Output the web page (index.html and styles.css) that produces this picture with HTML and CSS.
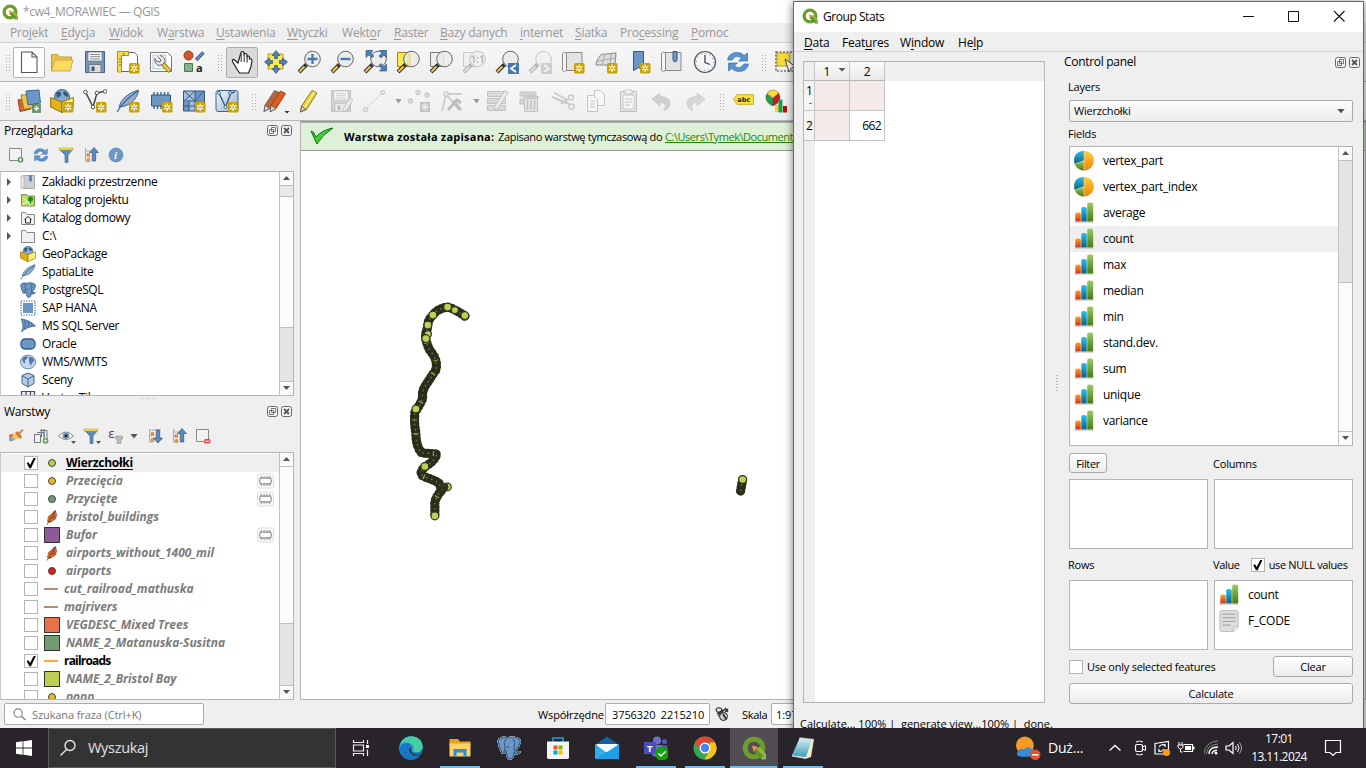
FILE: index.html
```html
<!DOCTYPE html>
<html lang="pl">
<head>
<meta charset="utf-8">
<title>cw4_MORAWIEC — QGIS</title>
<link rel="stylesheet" href="styles.css">
</head>
<body>
<svg class="sprite" aria-hidden="true">
<defs>
<linearGradient id="gO" x2="0" y2="1"><stop stop-color="#ffa030"/><stop offset="1" stop-color="#c83218"/></linearGradient>
<linearGradient id="gB" x2="0" y2="1"><stop stop-color="#2cc0ee"/><stop offset="1" stop-color="#0d5f80"/></linearGradient>
<linearGradient id="gG" x2="0" y2="1"><stop stop-color="#9ccc60"/><stop offset="1" stop-color="#477a10"/></linearGradient>
<linearGradient id="gY" x2="0" y2="1"><stop stop-color="#ffd040"/><stop offset="1" stop-color="#f88000"/></linearGradient>
<linearGradient id="gE" x2="1" y2="1"><stop stop-color="#35c8dd"/><stop offset="1" stop-color="#0d5cb8"/></linearGradient>
<linearGradient id="gS" x2="0" y2="1"><stop stop-color="#dff0f6"/><stop offset="1" stop-color="#39a0b8"/></linearGradient>
<linearGradient id="gLb" x2="1" y2="1"><stop stop-color="#f4f8fc"/><stop offset="1" stop-color="#8fb0d4"/></linearGradient>
</defs>
<symbol id="star" viewBox="0 0 24 24"><rect x="13" y="13" width="10.500" height="10.500" rx="1.500" fill="#c8a205"/><path d="M18.200 14.500v7.500M15 16.200l6.400 4M15 20.200l6.400-4" stroke="#fff" stroke-width="1.300"/><circle cx="18.200" cy="18.200" r="1" fill="#c8a205"/></symbol>
<symbol id="lens" viewBox="0 0 24 24"><path d="M9.500 14.500 2 22" stroke="#333" stroke-width="4"/><path d="M7.500 16.500 2.500 21.500" stroke="#fcc82c" stroke-width="2"/><circle cx="15.500" cy="9" r="7.800" fill="#e9ecea" fill-opacity=".88" stroke="#666" stroke-width="1"/></symbol>
<symbol id="qgis" viewBox="0 0 24 24"><circle cx="12" cy="12" r="8.800" fill="none" stroke="#6d9d2b" stroke-width="5"/><path d="m14 13.500 3.500-3L24 18v5.500h-4.500z" fill="#8fb63f"/><path d="m13 11.500 8.500 8.500-2.500 2.200-7.500-7z" fill="#5a9426"/><path d="m10 9.500 6 1.500-4.500 4.500z" fill="#f4923c"/></symbol>
<symbol id="new" viewBox="0 0 24 24"><path d="M4.500 2h10.500l5 5v15.500h-15.500zM15 2v5h5" fill="#fff" stroke="#555" stroke-width="1.100"/></symbol>
<symbol id="open" viewBox="0 0 24 24"><path d="M1.500 21V4.500h6l2 2.500h12v4" fill="#e8c050" stroke="#c49b3c"/><path d="M5 10h18l-3 11H1.500z" fill="#fcda62" stroke="#d0aa48"/></symbol>
<symbol id="save" viewBox="0 0 24 24"><path d="M2.500 1.500h19v21h-19z" fill="#6b96c6" stroke="#41658e"/><path d="M5 2h14v9H5z" fill="#f7f7f7" stroke="#777" stroke-width=".7"/><path d="M7 4.500h10M7 6.700h10M7 9h10" stroke="#888"/><path d="M6 14.500h12v8H6z" fill="#ddd" stroke="#777"/><path d="M8.500 16.500h3v4.500h-3z" fill="#36567b"/></symbol>
<symbol id="saveedit" viewBox="0 0 24 24"><use href="#save"/><path d="m21 9 3 2-6 10-4 2 .5-4z" fill="#ddd" stroke="#666"/></symbol>
<symbol id="layout" viewBox="0 0 24 24"><path d="M5.500 2.500h13l3 3v16h-16z" fill="#fff" stroke="#666"/><path d="M1.500 1.500h11v4h-7v16.500h-4z" fill="#f8dc4a" stroke="#b78e16"/><path d="M3 9h2M3 12h2M3 15h2M8 3v2" stroke="#8b6d10"/><use href="#star"/></symbol>
<symbol id="manager" viewBox="0 0 24 24"><path d="M1.500 2.500h17l4 4v15h-21z" fill="#fff" stroke="#777"/><path d="M4 5h13v14H4z" fill="#eef2f9" stroke="#9db1cf" stroke-width=".7"/><path d="m14 14 7 7.500" stroke="#967416" stroke-width="4.500"/><path d="m14 14 6.500 7" stroke="#f3d34a" stroke-width="2.500"/><path d="M8.500 6.500 12 10l-1 2-3-.5-2-3q-1 5 4 7l4-1 2-3q0-5-5-6" fill="#e8e8e8" stroke="#666"/></symbol>
<symbol id="style" viewBox="0 0 24 24"><circle cx="6.500" cy="5.500" r="4.500" fill="#d0562c" stroke="#8e3b20"/><path d="M21.500 2.500 14 10" stroke="#41658e" stroke-width="3.500"/><path d="M21 3 14.500 9.500" stroke="#6b96c6" stroke-width="1.500"/><path d="M2.500 13.500h8v8h-8z" fill="#83b287" stroke="#4b7a4f"/></symbol>
<symbol id="hand" viewBox="0 0 24 24"><path d="M8 13 4 9.500q-2-.5-1.500 2l5 8.500 2 3h9q3-6 3.500-12 0-3-2.500-2V7q-1-2-2.500 0V4.500q-1.500-2-3 0V2.500q-2-2-3 0z" fill="#fff" stroke="#222" stroke-width="1.200"/><path d="M11.200 4v8M14.200 5v7M17.200 7.500v5" stroke="#333"/></symbol>
<symbol id="pan" viewBox="0 0 24 24"><path d="M4 4h15v15H4z" fill="#fce94f" stroke="#b7971b"/><path d="m12 .5 4 5h-2.500v3h-3v-3H8zM12 23.500l4-5h-2.500v-3h-3v3H8zM.5 12l5-4v2.500h3v3h-3V16zM23.500 12l-5-4v2.500h-3v3h3V16z" fill="#4f7fb4" stroke="#355a84" stroke-width=".8"/></symbol>
<symbol id="zin" viewBox="0 0 24 24"><use href="#lens"/><path d="M10.500 9h10M15.500 4v10" stroke="#4878af" stroke-width="2.300"/></symbol>
<symbol id="zout" viewBox="0 0 24 24"><use href="#lens"/><path d="M10.500 9h10" stroke="#4878af" stroke-width="2.300"/></symbol>
<symbol id="zfull" viewBox="0 0 24 24"><use href="#lens"/><path d="M3 .5h7L7.800 3l3 3-2 2-3-3L3 7.500zM23.500.5v7L21 5l-3 3-2-2 3-3L16.500.5zM23.500 21h-7l2.300-2.500-3-3 2-2 3 3 2.700-2.500z" fill="#4f7fb4" stroke="#355a84" stroke-width=".7"/></symbol>
<symbol id="zsel" viewBox="0 0 24 24"><path d="M1.500 2.500h13v14h-13z" fill="#fce94f" stroke="#9d8712"/><use href="#lens"/><path d="M11 4h4v11h-4z" fill="#e7dc90" opacity=".7"/></symbol>
<symbol id="zlay" viewBox="0 0 24 24"><path d="M1.500 2.500h13v14h-13z" fill="#eee" stroke="#777"/><use href="#lens"/></symbol>
<symbol id="zlast" viewBox="0 0 24 24"><use href="#lens"/><path d="M13 13h11v11H13z" fill="#4878af"/><path d="m21 15-5 3.500 5 3.500" fill="none" stroke="#fff" stroke-width="1.800"/></symbol>
<symbol id="znext" viewBox="0 0 24 24"><use href="#lens"/><path d="M13 13h11v11H13z" fill="#888"/><path d="m16 15 5 3.500-5 3.500" fill="none" stroke="#fff" stroke-width="1.800"/></symbol>
<symbol id="scroll" viewBox="0 0 24 24"><path d="M5 2.500h16v18H5" fill="#e3e3e3" stroke="#888"/><path d="M1.500 3.500q2-3 4 0v17q-2 2.500-4 0z" fill="#f5f5f5" stroke="#888"/></symbol>
<symbol id="nview" viewBox="0 0 24 24"><use href="#scroll"/><use href="#star"/></symbol>
<symbol id="n3d" viewBox="0 0 24 24"><path d="M7 4.500 22 3l-1 12H2q0-3 2-6z" fill="#ddd" stroke="#888"/><path d="m4 11 18-3M11 4 8 15M17 4l-1 11" stroke="#aaa" fill="none"/><use href="#star"/></symbol>
<symbol id="nbm" viewBox="0 0 24 24"><path d="M6.500 1.500h10v19l-5-3-5 3z" fill="#6b96c6" stroke="#33587f"/><use href="#star"/></symbol>
<symbol id="bm" viewBox="0 0 24 24"><use href="#scroll"/><path d="M13 1.500h4v9l-2 1.500-2-1.500z" fill="#6b96c6" stroke="#33587f"/></symbol>
<symbol id="clock" viewBox="0 0 24 24"><circle cx="12" cy="12" r="10.500" fill="#f3f5f6" stroke="#555" stroke-width="1.200"/><circle cx="12" cy="12" r="8.500" fill="none" stroke="#4f7fb4" stroke-dasharray="1 3.450"/><path d="M12 5v7.500l5 2" fill="none" stroke="#444" stroke-width="1.300"/></symbol>
<symbol id="refresh" viewBox="0 0 24 24"><path d="M1.500 10Q3 2.500 11 2.500q5 0 7 3l3.500-2.500V11h-9l3-2.500q-5-5-9.500 1.500z" fill="#5b93cf" stroke="#3a73b0" stroke-width=".7"/><path d="M22.500 14Q21 21.500 13 21.500q-5 0-7-3L2.500 21v-8h9l-3 2.500q5 5 9.500-1.500z" fill="#5b93cf" stroke="#3a73b0" stroke-width=".7"/></symbol>
<symbol id="select" viewBox="0 0 24 24"><path d="M2 2h20v19H2z" fill="#f4f4f4" stroke="#333" stroke-width="1.200" stroke-dasharray="2 1.500"/><path d="M3 3h13v13H3z" fill="#f5dc3c" stroke="#b79c18"/><path d="m11 9 4 13 2.500-4 4.500-1z" fill="#fff" stroke="#444"/></symbol>
<symbol id="dsm" viewBox="0 0 24 24"><path d="m1 11 10-2 3 11-11 2.500z" fill="#d4622e" stroke="#994420"/><path d="m4 6 13-1 2 13-12 2z" fill="#eec44a" stroke="#a98622"/><path d="m9 2 13-1 1.500 13-12.500 2z" fill="#6b96c6" stroke="#41658e"/><path d="M15.500 15.500h8v8h-8z" fill="#5b9b61" stroke="#3f7345" stroke-width=".5"/><path d="M19.500 17v5M17 19.500h5" stroke="#fff" stroke-width="1.500"/></symbol>
<symbol id="gpkg" viewBox="0 0 24 24"><circle cx="12" cy="8" r="7.500" fill="#86a9cf" stroke="#41658e"/><path d="M6 4q4-3 5 0t-4 5M14 2q5 2 4 6-4-1-5-4" fill="#36567b"/><path d="M.7 8.500 12 13v10.500L.7 18z" fill="#e2b312" stroke="#8d720e"/><path d="M23.300 8.500 12 13v10.500L23.300 18z" fill="#fff07a" stroke="#8d720e"/></symbol>
<symbol id="ngpkg" viewBox="0 0 24 24"><use href="#gpkg"/><use href="#star"/></symbol>
<symbol id="vline" viewBox="0 0 24 24"><path d="m2.500 3 7.500 15 4-14 8-2" fill="none" stroke="#444" stroke-width="1.500"/><g fill="#fff" stroke="#555"><circle cx="2.500" cy="3" r="1.800"/><circle cx="14" cy="4" r="1.800"/><circle cx="22" cy="2.500" r="1.800"/><circle cx="10" cy="18" r="1.800"/></g></symbol>
<symbol id="nshp" viewBox="0 0 24 24"><use href="#vline"/><use href="#star"/></symbol>
<symbol id="feather" viewBox="0 0 24 24"><path d="M3 18Q6 6 22.500 1 22 8 15 14 9 18 3 18z" fill="#8fb0d4" stroke="#41658e"/><path d="M1 23Q8 11 22 2" fill="none" stroke="#41658e" stroke-width="1.300"/></symbol>
<symbol id="nfeather" viewBox="0 0 24 24"><use href="#feather"/><use href="#star"/></symbol>
<symbol id="chip" viewBox="0 0 24 24"><path d="M5 3v17M8.500 3v17M12 3v17M15.500 3v17M19 3v17" stroke="#33587f" stroke-width="1.300"/><path d="M2.500 6h19v11h-19z" fill="#6b96c6" stroke="#33587f"/></symbol>
<symbol id="nchip" viewBox="0 0 24 24"><use href="#chip"/><use href="#star"/></symbol>
<symbol id="mesh" viewBox="0 0 24 24"><path d="M1.500 2h21v20h-21z" fill="#a7c0dc"/><path d="M13 2h9.500v9H13zM1.500 13H7v9H1.500z" fill="#6b96c6"/><path d="M1.500 2h21v20h-21zM13 2v20M1.500 12h21M2 2l11 10M13 2 2 12M22 2l-9 10M7 12v10M1.500 17H13" fill="none" stroke="#33587f"/></symbol>
<symbol id="nmesh" viewBox="0 0 24 24"><use href="#mesh"/><use href="#star"/></symbol>
<symbol id="nvirt" viewBox="0 0 24 24"><rect x="1" y="1.500" width="22" height="21" rx="2" fill="url(#gLb)" stroke="#41658e"/><path d="m4 4 6.500 14L16 4l4-1" fill="none" stroke="#33587f" stroke-width="1.400"/><g fill="#fff" stroke="#41658e"><circle cx="4" cy="4" r="1.500"/><circle cx="10.500" cy="18" r="1.500"/><circle cx="15" cy="4" r="1.500"/></g><use href="#star"/></symbol>
<symbol id="pencil" viewBox="0 0 24 24"><path d="M16 1.500l5 2.500-10.500 16.500-6 2.500 1-6z" fill="#e9d23c" stroke="#8a7a1e"/><path d="m18.500 3-10.500 16" stroke="#fff39a" stroke-width="1.300"/><path d="m5.500 17 4.500 3.500-5.500 2.500z" fill="#d8c8a8" stroke="#555" stroke-width=".8"/></symbol>
<symbol id="pencils" viewBox="0 0 24 24"><path d="M11.500 1.500l5 2L7 19.500l-6 3 1-6.500z" fill="#b5653c" stroke="#777"/><path d="M17.500 2l5 2.500-9.500 15-5.500 3 .5-6z" fill="#e25c20" stroke="#a33d10"/><path d="m8 16.500 5 3-6 3.500zM2 16l4.500 3.500-5.500 3z" fill="#e0d4c8" stroke="#555" stroke-width=".8"/></symbol>
<symbol id="lines" viewBox="0 0 24 24"><path d="m4 20 16-16" stroke="#555" stroke-dasharray="2 1.500"/><g fill="#ddd" stroke="#555"><circle cx="3.500" cy="20.500" r="2"/><circle cx="20.500" cy="3.500" r="2"/></g></symbol>
<symbol id="points" viewBox="0 0 24 24"><g fill="#aaa" stroke="#666"><circle cx="3.500" cy="12" r="2.300"/><circle cx="11" cy="3.500" r="2.300"/><circle cx="20" cy="6" r="2.300"/></g><path d="M13 13h10v10H13z" fill="#666"/><path d="M18 14v8M14 18h8M15 15l6 6M21 15l-6 6" stroke="#fff"/></symbol>
<symbol id="vertex" viewBox="0 0 24 24"><path d="M2 22 6 5h16M6 5l13 16" fill="none" stroke="#666" stroke-width="1.300"/><circle cx="6" cy="5" r="2.300" fill="#ddd" stroke="#555"/><path d="m8 21 9-10 4 3M13 12l8 9" stroke="#555" stroke-width="3" fill="none"/></symbol>
<symbol id="attrs" viewBox="0 0 24 24"><path d="M2.500 2.500h18v5h-18zM2.500 9.500h18v5h-18zM2.500 16.500h18v5h-18z" fill="#a8a888" stroke="#666"/><path d="M20 1.500l3 2L13.500 19 9 21.500l1-5z" fill="#ddd" stroke="#555"/></symbol>
<symbol id="trash" viewBox="0 0 24 24"><path d="M2 3h16v4H2zM2 10h6v5H2z" fill="#a99" stroke="#755"/><path d="M6.500 9.500h13v13h-13z" fill="#dcc" stroke="#855"/><path d="M9.500 11v10M13 11v10M16.500 11v10M4.500 8h17M11 6h5" stroke="#855" stroke-width="1.500"/></symbol>
<symbol id="cut" viewBox="0 0 24 24"><path d="m1 8 17 7M3 3.500l14 8" stroke="#777" stroke-width="2"/><circle cx="20" cy="8.500" r="2.500" fill="none" stroke="#777" stroke-width="1.500"/><circle cx="20.500" cy="17.500" r="2.500" fill="none" stroke="#777" stroke-width="1.500"/><path d="m10 15 7-5" stroke="#777" stroke-width="2"/></symbol>
<symbol id="copy" viewBox="0 0 24 24"><path d="M10.500 1.500h6l4 4v11h-10z" fill="#fff" stroke="#666"/><path d="M3.500 6.500h6l4 4v12h-10z" fill="#fff" stroke="#666"/><path d="M6 12h5M6 15h5M6 18h5" stroke="#666"/></symbol>
<symbol id="paste" viewBox="0 0 24 24"><path d="M3.500 2.500h16v20h-16z" fill="#ccc" stroke="#555"/><path d="M6 6h11v14H6z" fill="#fff" stroke="#777"/><path d="M8 1h7v4H8zM8 10h7M8 13h7M8 16h5" fill="#eee" stroke="#666"/></symbol>
<symbol id="undo" viewBox="0 0 24 24"><path d="m2 10 8-6v3.500q10 0 10 7 0 5-6 7 4-8-4-8v3.500z" fill="#a08874" stroke="#776a60" stroke-width=".7"/></symbol>
<symbol id="redo" viewBox="0 0 24 24"><path d="m22 10-8-6v3.500q-10 0-10 7 0 5 6 7-4-8 4-8v3.500z" fill="#98a098" stroke="#707870" stroke-width=".7"/></symbol>
<symbol id="abc" viewBox="0 0 24 24"><path d="M.5 12 4.500 6.500h19v11h-19z" fill="#fbe13a" stroke="#c7a41a"/></symbol>
<symbol id="diag" viewBox="0 0 24 24"><path d="M9 10V17Q2 14 2 8q0-2 1-3z" fill="#18a048" stroke="#333" stroke-width=".5"/><path d="M9 9 3 4q6-6 12 0z" fill="#fce028" stroke="#555" stroke-width=".5"/><path d="m9 9 6-5q3 6-2 11l-4 2z" fill="#c41c1c"/><path d="M11 16h4v7h-4z" fill="#f6d020"/><path d="M14.500 10.500h4v13h-4z" fill="#18a048"/><path d="M19 17h4v6.500h-4z" fill="#b01010"/></symbol>
<symbol id="addl" viewBox="0 0 16 16"><path d="M1.500 1.500h12v12h-12z" fill="#f2f2f2" stroke="#888"/><circle cx="12.500" cy="12.800" r="2.900" fill="#5b9b61"/><path d="M12.500 11.200v3.200M10.900 12.800h3.200" stroke="#fff"/></symbol>
<symbol id="funnel" viewBox="0 0 16 16"><path d="M1 2h14l-5 6v7.500H7V8z" fill="#5d8bbd" stroke="#41658e" stroke-width=".6"/><path d="M1 1h14v2H1z" fill="#fce94f" stroke="#b79c18" stroke-width=".6"/></symbol>
<symbol id="collapse" viewBox="0 0 16 16"><path d="M2.500 1v13H6M2.500 4H10M2.500 8h3" fill="none" stroke="#aaa"/><path d="M4.500 7h2v2h-2zM4.500 12h2v2h-2z" fill="#fff" stroke="#e8851c" stroke-width="1.300"/><path d="m11 .500 4.500 5h-2.800V14H9.300V5.500H6.500z" fill="#5d8bbd" stroke="#33587f" stroke-width=".7"/></symbol>
<symbol id="expand" viewBox="0 0 16 16"><path d="M2.500 1v13H6M2.500 2H14M2.500 8h3" fill="none" stroke="#aaa"/><path d="M4.500 5h2v2h-2zM4.500 11h2v2h-2z" fill="#fff" stroke="#e8851c" stroke-width="1.300"/><path d="m11 15 4.500-5h-2.800V2H9.300v8H6.500z" fill="#5d8bbd" stroke="#33587f" stroke-width=".7"/></symbol>
<symbol id="info" viewBox="0 0 16 16"><circle cx="8" cy="8" r="7" fill="#6b96c6" stroke="#537fb0" stroke-width=".6"/></symbol>
<symbol id="tscroll" viewBox="0 0 16 16"><path d="M3 1.500h11.500v13H3z" fill="#ccd0d4" stroke="#aaa"/><path d="M1 2h3v12H1z" fill="#eee" stroke="#aaa" stroke-width=".7"/><path d="M9 1h3v6l-1.500 1L9 7z" fill="#5d8bbd"/></symbol>
<symbol id="tproj" viewBox="0 0 16 16"><path d="M1.500 2.500h5l1 1.500h7v10h-13z" fill="#bedc5a" stroke="#7f8f60"/><path d="m3 6 8 7M2 13l6-4" stroke="#fff" stroke-width=".8"/><circle cx="10.500" cy="7" r="2.600" fill="#139813"/><path d="M10.500 8v4" stroke="#139813"/></symbol>
<symbol id="folder" viewBox="0 0 16 16"><path d="M1.500 2.500h4l1.500 2h7.500v10h-13z" fill="#f1f1f1" stroke="#888"/></symbol>
<symbol id="home" viewBox="0 0 16 16"><use href="#folder"/><path d="m4.500 9.500 3.500-3 3.500 3M5.500 9v4h5V9" fill="none" stroke="#333"/></symbol>
<symbol id="eleph" viewBox="0 0 24 24"><path d="M2 3q4-3 8-1 5-2 10 0 4 1 3 5-1 4-4 7l1 2q2-1 3 0-2 2-5 2l-1-2q0 6-3 7-3 1-4-3l-1-5q-2 3-4 2Q2 12 1 5z" fill="#6b96c6" stroke="#33587f" stroke-width="1.200"/><path d="M9 3q-3 3-1 8l-1 5M16 3q3 3 1 8 0 3 1 5M9 11q2 2 3-1" fill="none" stroke="#33587f"/></symbol>
<symbol id="hana" viewBox="0 0 16 16"><path d="M1 1h14v14H1z" fill="none" stroke="#33587f" stroke-width="1.200" stroke-dasharray="1.200 1.350"/><path d="M3 3h10v10H3z" fill="#6b96c6"/></symbol>
<symbol id="mssql" viewBox="0 0 16 16"><path d="M1 1q9 1 14.500 7Q6 9 1.500 14q3-6-.5-13z" fill="#6b96c6" stroke="#33587f" stroke-width=".7"/><path d="M4.500 2q2 5 0 9.500M8 3q2 3 0 6.500M11.500 5q1 2 0 3.500" stroke="#33587f" fill="none" stroke-width=".7"/></symbol>
<symbol id="oracle" viewBox="0 0 16 16"><rect x="1" y="3" width="14" height="10" rx="4" fill="#6b96c6" stroke="#33587f" stroke-width="1.300"/></symbol>
<symbol id="globe" viewBox="0 0 16 16"><ellipse cx="8" cy="8" rx="7.500" ry="6.800" fill="#c5d8ec" stroke="#6b87a8"/><path d="M2 5q3-4 6-2-1 3-3 3v4q-2-1-3-5M9 3q5 0 5 4l-2 2-1 3-2-4z" fill="#4d79a9"/></symbol>
<symbol id="cube" viewBox="0 0 16 16"><path d="m8 1 6 2.500v8L8 15l-6-3.500v-8z" fill="#b4cbe3" stroke="#41658e"/><path d="M2 3.500 8 7l6-3.500M8 7v8" fill="none" stroke="#41658e"/></symbol>
<symbol id="vtile" viewBox="0 0 16 16"><path d="M1.500 1.500h13v13h-13zM1.500 6h13M6 1.500v13M10.500 1.500v13" fill="#e8ecf0" stroke="#41505e" stroke-width="1.200"/></symbol>
<symbol id="brush" viewBox="0 0 16 16"><path d="M1 7q4-2 7-1l3 4q-5 4-10 3z" fill="#f4cc50"/><path d="M1 7q2-1 4-1l-1 3.500L1 9z" fill="#e0606a"/><path d="m1 9.500 5 .5-1 3H1z" fill="#6fa4dc"/><path d="m7 5 5 6 2-2-4-6z" fill="#d8702c"/><path d="m10.500 6.500 4.500-5" stroke="#c99a50" stroke-width="2"/></symbol>
<symbol id="addg" viewBox="0 0 16 16"><path d="M1.500 6.500h6v8h-6zM4 4.500h7v9M7 2.500h7v9" fill="none" stroke="#777"/><path d="M8.500 1v8M11 1v8" stroke="#4878af"/><circle cx="12.500" cy="12.800" r="2.900" fill="#5b9b61"/><path d="M12.500 11.200v3.200M10.900 12.800h3.200" stroke="#fff"/></symbol>
<symbol id="eye" viewBox="0 0 16 16"><path d="M.5 8Q8 0 15.500 8 8 15 .5 8z" fill="#f4f4f4" stroke="#888"/><circle cx="8" cy="7.700" r="3.300" fill="#6b96c6"/><circle cx="8" cy="7.700" r="1.500" fill="#222"/></symbol>
<symbol id="eps" viewBox="0 0 16 16"><path d="M7.500 8h7v3h-1.500v4.500h-4V11H7.500z" fill="#bbb" stroke="#999" stroke-width=".6"/></symbol>
<symbol id="reml" viewBox="0 0 16 16"><path d="M1.500 1.500h12v12h-12z" fill="#f2f2f2" stroke="#888"/><rect x="9" y="11" width="6.500" height="4.500" rx="1.500" fill="#e0454a"/><path d="M10 13.200h4.500" stroke="#fff"/></symbol>
<symbol id="chips" viewBox="0 0 18 16"><rect x=".5" y=".5" width="17" height="15" rx="2" fill="#f7f7f7" stroke="#ddd"/><path d="M4.500 3v10M7.500 3v10M10.500 3v10M13.500 3v10" stroke="#777"/><rect x="3" y="5" width="12" height="6" rx="1" fill="#fff" stroke="#777"/></symbol>
<symbol id="quill" viewBox="0 0 16 16"><path d="m11.500 1.500-7 6-1 5 2 1 6-3.500 1-4z" fill="#e67028" stroke="#8c4b28" stroke-width=".7"/><path d="m3 15.500 8.500-14M5 12.500h3M6.500 9h4M10 2v7" stroke="#734023" stroke-width=".9"/></symbol>
<symbol id="bars" viewBox="0 0 24 24"><path d="M2.500 13q0-1.500 3-1.500t3 1.500v8.500h-6z" fill="url(#gO)"/><path d="M9 7q0-1.500 3-1.500T15 7v14.500H9z" fill="url(#gB)"/><path d="M15.500 2q0-1.500 3-1.500T22 2v19.500h-6.500z" fill="url(#gG)"/><path d="M1.500 22h21" stroke="#ccc" stroke-width="1.300"/></symbol>
<symbol id="pie" viewBox="0 0 24 24"><circle cx="12" cy="11.500" r="10.800" fill="url(#gY)"/><path d="M12 .7v10.800L2 15.500Q-1 6 7 2z" fill="url(#gB)"/><path d="M12 11.500v10.800Q5 22 2 15.500z" fill="url(#gG)"/><path d="M12 .7v21.600M12 11.500 2 15.500" stroke="#ddd" stroke-width=".7"/></symbol>
<symbol id="doc" viewBox="0 0 24 24"><path d="M4 .5h16q2 0 2 2v16l-5 5H4q-2 0-2-2v-19q0-2 2-2z" fill="#ddd" stroke="#bbb"/><path d="M5 4.500h14M5 8.500h14M5 12.500h14M5 16.500h9" stroke="#999"/><path d="m22 18.500-5 5v-5z" fill="#fff" stroke="#bbb"/></symbol>
<symbol id="float" viewBox="0 0 11 11"><rect x=".5" y=".5" width="10" height="10" rx="2" fill="#f6f6f6" stroke="#666"/><path d="M4.500 2.500h4v4h-4zM2.500 4.500h4v4h-4z" fill="#f6f6f6" stroke="#666" stroke-width=".9"/></symbol>
<symbol id="xbox" viewBox="0 0 11 11"><rect x=".5" y=".5" width="10" height="10" rx="2" fill="#f6f6f6" stroke="#666"/><path d="m3 3 5 5M8 3 3 8" stroke="#555" stroke-width="1.800"/></symbol>
</svg>

<div class="desktop">
 <div class="main">
  <div class="title"><svg class="i18"><use href="#qgis"/></svg><span>*cw4_MORAWIEC — QGIS</span></div>
  <div class="menu"><span>Pro<u>j</u>ekt</span><span><u>E</u>dycja</span><span><u>W</u>idok</span><span>W<u>a</u>rstwa</span><span><u>U</u>stawienia</span><span><u>W</u>tyczki</span><span>Wekt<u>o</u>r</span><span><u>R</u>aster</span><span><u>B</u>azy danych</span><span><u>i</u>nternet</span><span><u>S</u>iatka</span><span>Pro<u>c</u>essing</span><span><u>P</u>omoc</span></div>
  <div class="bar">
   <i class="grip"></i>
   <b class="raised"><svg><use href="#new"/></svg></b><b><svg><use href="#open"/></svg></b><b><svg><use href="#save"/></svg></b><b><svg><use href="#layout"/></svg></b><b><svg><use href="#manager"/></svg></b><b><svg viewBox="0 0 24 24"><use href="#style"/><text class="t-a" x="14" y="22">a</text></svg></b>
   <i class="grip"></i>
   <b class="pressed"><svg><use href="#hand"/></svg></b><b><svg><use href="#pan"/></svg></b><b><svg><use href="#zin"/></svg></b><b><svg><use href="#zout"/></svg></b><b><svg><use href="#zfull"/></svg></b><b><svg><use href="#zsel"/></svg></b><b><svg><use href="#zlay"/></svg></b><b class="off"><svg viewBox="0 0 24 24"><use href="#zlay"/><text class="t-11" x="8.500" y="13">1:1</text></svg></b><b><svg><use href="#zlast"/></svg></b><b class="off"><svg><use href="#znext"/></svg></b><b><svg><use href="#nview"/></svg></b><b><svg><use href="#n3d"/></svg></b><b><svg><use href="#nbm"/></svg></b><b><svg><use href="#bm"/></svg></b><b><svg><use href="#clock"/></svg></b><b><svg><use href="#refresh"/></svg></b>
   <i class="grip"></i><b><svg><use href="#select"/></svg></b>
  </div>
  <div class="bar second">
   <i class="grip"></i>
   <b><svg><use href="#dsm"/></svg></b><b><svg><use href="#ngpkg"/></svg></b><b><svg><use href="#nshp"/></svg></b><b><svg><use href="#nfeather"/></svg></b><b><svg><use href="#nchip"/></svg></b><b><svg><use href="#nmesh"/></svg></b><b><svg><use href="#nvirt"/></svg></b>
   <i class="grip"></i>
   <b class="drop"><svg><use href="#pencils"/></svg></b><b><svg><use href="#pencil"/></svg></b><b class="off"><svg><use href="#saveedit"/></svg></b><b class="off"><svg><use href="#lines"/></svg></b><i class="caret"></i><b class="off"><svg><use href="#points"/></svg></b><b class="off"><svg><use href="#vertex"/></svg></b><i class="caret"></i><b class="off"><svg><use href="#attrs"/></svg></b><b class="off"><svg><use href="#trash"/></svg></b><b class="off"><svg><use href="#cut"/></svg></b><b class="off"><svg><use href="#copy"/></svg></b><b class="off"><svg><use href="#paste"/></svg></b><b class="off"><svg><use href="#undo"/></svg></b><b class="off"><svg><use href="#redo"/></svg></b>
   <i class="grip"></i><b class="label"><svg viewBox="0 0 24 24"><use href="#abc"/><text class="t-abc" x="4.800" y="15">abc</text></svg></b><b><svg><use href="#diag"/></svg></b>
  </div>
  <div class="work">
   <div class="docks">
    <div class="dock browser">
     <div class="dtitle"><span>Przeglądarka</span><svg><use href="#float"/></svg><svg><use href="#xbox"/></svg></div>
     <div class="dbar"><svg><use href="#addl"/></svg><svg><use href="#refresh"/></svg><svg><use href="#funnel"/></svg><svg><use href="#collapse"/></svg><svg viewBox="0 0 16 16"><use href="#info"/><text class="t-i" x="6" y="12">i</text></svg></div>
     <div class="box">
      <div class="tree">
       <div class="tr exp"><svg><use href="#tscroll"/></svg>Zakładki przestrzenne</div>
       <div class="tr exp"><svg><use href="#tproj"/></svg>Katalog projektu</div>
       <div class="tr exp"><svg><use href="#home"/></svg>Katalog domowy</div>
       <div class="tr exp"><svg><use href="#folder"/></svg>C:\</div>
       <div class="tr"><svg><use href="#gpkg"/></svg>GeoPackage</div>
       <div class="tr"><svg><use href="#feather"/></svg>SpatiaLite</div>
       <div class="tr"><svg><use href="#eleph"/></svg>PostgreSQL</div>
       <div class="tr"><svg><use href="#hana"/></svg>SAP HANA</div>
       <div class="tr"><svg><use href="#mssql"/></svg>MS SQL Server</div>
       <div class="tr"><svg><use href="#oracle"/></svg>Oracle</div>
       <div class="tr"><svg><use href="#globe"/></svg>WMS/WMTS</div>
       <div class="tr"><svg><use href="#cube"/></svg>Sceny</div>
       <div class="tr"><svg><use href="#vtile"/></svg>Vector Tiles</div>
      </div>
      <div class="scroll"><i class="up"></i><i class="piece"></i><i class="space"></i><i class="thumb t1"></i><i class="down"></i></div>
     </div>
    </div>
    <div class="hsplit"></div>
    <div class="dock layers">
     <div class="dtitle"><span>Warstwy</span><svg><use href="#float"/></svg><svg><use href="#xbox"/></svg></div>
     <div class="dbar"><svg><use href="#brush"/></svg><svg><use href="#addg"/></svg><em><svg><use href="#eye"/></svg></em><em><svg><use href="#funnel"/></svg></em><svg class="eps" viewBox="0 0 16 16"><use href="#eps"/><text class="t-e" x="0" y="10">ε</text></svg><i class="caret"></i><svg><use href="#expand"/></svg><svg><use href="#collapse"/></svg><svg><use href="#reml"/></svg></div>
     <div class="box">
      <div class="tree lt">
       <div class="lr cur"><i class="cb on"></i><i class="pt lime"></i><span><u>Wierzchołki</u></span></div>
       <div class="lr"><i class="cb"></i><i class="pt gold"></i><span>Przecięcia</span><svg class="mem"><use href="#chips"/></svg></div>
       <div class="lr"><i class="cb"></i><i class="pt green"></i><span>Przycięte</span><svg class="mem"><use href="#chips"/></svg></div>
       <div class="lr"><i class="cb"></i><svg class="q"><use href="#quill"/></svg><span>bristol_buildings</span></div>
       <div class="lr"><i class="cb"></i><i class="sw purple"></i><span>Bufor</span><svg class="mem"><use href="#chips"/></svg></div>
       <div class="lr"><i class="cb"></i><svg class="q"><use href="#quill"/></svg><span>airports_without_1400_mil</span></div>
       <div class="lr"><i class="cb"></i><i class="pt red"></i><span>airports</span></div>
       <div class="lr"><i class="cb"></i><i class="ln"></i><span>cut_railroad_mathuska</span></div>
       <div class="lr"><i class="cb"></i><i class="ln"></i><span>majrivers</span></div>
       <div class="lr"><i class="cb"></i><i class="sw coral"></i><span>VEGDESC_Mixed Trees</span></div>
       <div class="lr"><i class="cb"></i><i class="sw sage"></i><span>NAME_2_Matanuska-Susitna</span></div>
       <div class="lr vis"><i class="cb on"></i><i class="ln orange"></i><span>railroads</span></div>
       <div class="lr"><i class="cb"></i><i class="sw limesw"></i><span>NAME_2_Bristol Bay</span></div>
       <div class="lr"><i class="cb"></i><i class="pt gold"></i><span>popp</span></div>
      </div>
      <div class="scroll"><i class="up"></i><i class="space"></i><i class="thumb t2"></i><i class="down"></i></div>
     </div>
    </div>
   </div>
   <div class="canvas">
    <div class="msg"><svg viewBox="0 0 24 18"><path d="M1 4q3 0 5 6Q12 3 23 1 12 8 7 17 4 11 1 4z" fill="#2fd62f" stroke="#186818"/></svg><strong>Warstwa została zapisana:</strong><span>Zapisano warstwę tymczasową do</span><a>C:\Users\Tymek\Documents\cw4</a></div>
    <svg class="map" viewBox="301 151 1065 548">
     <defs><path id="river" d="M465 316Q454 308 447 307 437 309 433 315 427 321 428 327 424 336 427 343 429 350 433 354 438 362 436 370 431 377 428 382 421 391 423 398 419 407 415 412 414 423 416 433 416 447 422 453L437 454Q434 462 426 466 417 474 425 477 434 480 439 483L442 490Q434 499 435 506L435 516M743 480 741 491"/></defs>
     <g fill="none" stroke-linejoin="round" stroke-linecap="round">
      <use href="#river" stroke="#33361f" stroke-width="7.500"/>
      <use href="#river" stroke="#2b2d1c" stroke-width="9.400" stroke-dasharray=".1 3.600"/>
      <use href="#river" stroke="#aaba4c" stroke-width="5" stroke-linecap="butt" stroke-dasharray="1 19 .7 13 1 31"/>
      <use href="#river" stroke="#6d783a" stroke-width="1.600" stroke-dasharray=".2 5"/>
     </g>
     <g fill="#bfd24f" stroke="#33361f" stroke-width="1.200"><circle cx="455" cy="310" r="3.500"/><circle cx="465" cy="315.500" r="3.900"/><circle cx="447.700" cy="307" r="3.900"/><circle cx="433" cy="315" r="3.900"/><circle cx="428" cy="334" r="3.500"/><circle cx="428" cy="325" r="3.900"/><circle cx="426" cy="338.500" r="3.900"/><circle cx="416" cy="409" r="3.900"/><circle cx="425" cy="466.500" r="3.900"/><circle cx="447.500" cy="487" r="3.900"/><circle cx="435" cy="516" r="3.900"/><circle cx="743" cy="479.500" r="3.900"/></g>
     <circle cx="444.500" cy="487" r="4" fill="#33361f"/>
    </svg>
   </div>
  </div>
  <div class="status">
   <div class="locator"><svg viewBox="0 0 14 14"><circle cx="5.500" cy="5.500" r="4.500" fill="none" stroke="#888" stroke-width="1.200"/><path d="m9 9 4.500 4" stroke="#888" stroke-width="1.500"/></svg>Szukana fraza (Ctrl+K)</div>
   <span class="coordl">Współrzędne</span><div class="field coord">3756320&nbsp; 2215210</div>
   <svg class="mouse" viewBox="0 0 16 16"><path d="m2 3 9 10M11 2l3 4M4 10l7-7" stroke="#333" stroke-width="1.300"/><ellipse cx="5" cy="4" rx="3" ry="2.300" fill="#ddd" stroke="#222"/><ellipse cx="9.500" cy="10.500" rx="4" ry="4" fill="#ccc" stroke="#222"/><path d="m3 8 6-4M9 8l3 5M11 6l3-3" stroke="#222" stroke-width="1.500"/></svg>
   <span class="scalel">Skala</span><div class="field scale">1:973446</div>
  </div>
 </div>

 <div class="dialog">
  <div class="dgtitle"><svg class="i18"><use href="#qgis"/></svg><span>Group Stats</span>
   <svg class="wc" viewBox="0 0 138 30"><path d="M18 14.500h11" stroke="#111"/><path d="M63.500 9.500h10v10h-10z" fill="none" stroke="#111"/><path d="m109 9 10.500 10.500M119.500 9 109 19.500" stroke="#111" stroke-width="1.100"/></svg></div>
  <div class="dgmenu"><span><u>D</u>ata</span><span>Feat<u>u</u>res</span><span>W<u>i</u>ndow</span><span>He<u>l</u>p</span></div>
  <div class="dgbody">
   <div class="left">
    <div class="pivot">
     <div class="hd"><i></i><span class="h1">1<i class="caret"></i></span><span>2</span></div>
     <div class="prow"><span class="vh">1<small>-</small></span><span class="cell pink"></span><span class="cell pink"></span></div>
     <div class="prow"><span class="vh">2</span><span class="cell pink"></span><span class="cell">662</span></div>
     <div class="rest"></div>
    </div>
    <div class="dgstatus">Calculate... 100% |&nbsp; generate view...100% |&nbsp; done.</div>
   </div>
   <div class="vsplit"></div>
   <div class="panel">
    <div class="dtitle"><span>Control panel</span><svg><use href="#float"/></svg><svg><use href="#xbox"/></svg></div>
    <div class="pin">
     <div class="lab l1">Layers</div>
     <div class="combo"><span>Wierzchołki</span><i class="caret"></i></div>
     <div class="lab l2">Fields</div>
     <div class="box fields">
      <div class="tree">
       <div class="fr"><svg><use href="#pie"/></svg>vertex_part</div><div class="fr"><svg><use href="#pie"/></svg>vertex_part_index</div><div class="fr"><svg><use href="#bars"/></svg>average</div><div class="fr cur"><svg><use href="#bars"/></svg>count</div><div class="fr"><svg><use href="#bars"/></svg>max</div><div class="fr"><svg><use href="#bars"/></svg>median</div><div class="fr"><svg><use href="#bars"/></svg>min</div><div class="fr"><svg><use href="#bars"/></svg>stand.dev.</div><div class="fr"><svg><use href="#bars"/></svg>sum</div><div class="fr"><svg><use href="#bars"/></svg>unique</div><div class="fr"><svg><use href="#bars"/></svg>variance</div>
      </div>
      <div class="scroll"><i class="up"></i><i class="thumb t3"></i><i class="space"></i><i class="down"></i></div>
     </div>
     <div class="two r1"><div><span class="btn">Filter</span></div><div>Columns</div></div>
     <div class="two areas"><div></div><div></div></div>
     <div class="two r2"><div>Rows</div><div>Value<i class="cb on"></i><span>use NULL values</span></div></div>
     <div class="two areas"><div></div><div><div class="fr"><svg><use href="#bars"/></svg>count</div><div class="fr"><svg><use href="#doc"/></svg>F_CODE</div></div></div>
     <div class="foot"><i class="cb"></i><span>Use only selected features</span><span class="btn clear">Clear</span></div>
     <span class="btn calc">Calculate</span>
    </div>
   </div>
  </div>
 </div>
</div>

<div class="taskbar">
 <div class="start"><svg viewBox="0 0 16 16"><path d="m0 2.200 6.600-.9v6.300H0zM7.400 1.200 16 0v7.600H7.400zM0 8.400h6.600v6.300L0 13.800zM7.400 8.400H16V16l-8.600-1.200z" fill="#fff"/></svg></div>
 <div class="search"><svg viewBox="0 0 18 18"><circle cx="11" cy="6.500" r="5" fill="none" stroke="#eee" stroke-width="1.300"/><path d="M7.500 10.500 1.500 16.500" stroke="#eee" stroke-width="1.300"/></svg>Wyszukaj</div>
 <div class="tv"><svg viewBox="0 0 18 18"><path d="M1.500 1v2.500h10V1M1.500 17v-2.500h10V17M1.500 6h10v6h-10zM15.500 1v4M15.500 10.500V17" fill="none" stroke="#eee" stroke-width="1.200"/><path d="M14 6h3v3h-3z" fill="#fff"/></svg></div>
 <div class="app"><svg viewBox="0 0 24 24"><circle cx="12" cy="12" r="11.800" fill="url(#gE)"/><path d="M2 7Q6 0 13 .3q10 1 10.800 11-1 5-6 5-4 0-4-2 2-3-1-6Q8 5 2 7z" fill="#43cfa3"/><path d="M1 15Q0 7 7 7q5 0 5 4-3 3-1 7 3 4 9 2-4 5-11 3.500Q3 22 1 15z" fill="#1676c8"/><path d="M13 11q-2 2-.5 5 3 4 9 2-2 2-6 1.500-6-2-5-7z" fill="#29232a"/></svg></div>
 <div class="app run"><svg viewBox="0 0 24 24"><path d="M1.500 3H10l2 2.500h10.500V9h-21z" fill="#e6a117"/><path d="M1.500 7.500h21v13h-21z" fill="#fcd364"/><path d="M5.500 20.500V13h13v7.500h-3v-4h-7v4z" fill="#2d8cdc"/></svg></div>
 <div class="app elephant"><svg><use href="#eleph"/></svg></div>
 <div class="app"><svg viewBox="0 0 24 24"><path d="M7 6V2h10v4" fill="none" stroke="#1aa1e8" stroke-width="1.500"/><path d="M1 5.500h22v16q0 1.500-2 1.500H3q-2 0-2-1.500z" fill="#f4f4f4"/><path d="M7.500 9.500h4v4h-4z" fill="#f25022"/><path d="M12.500 9.500h4v4h-4z" fill="#7fba00"/><path d="M7.500 14.500h4v4h-4z" fill="#00a4ef"/><path d="M12.500 14.500h4v4h-4z" fill="#ffb900"/></svg></div>
 <div class="app"><svg viewBox="0 0 24 24"><path d="M0 9 12 .5 24 9v4H0z" fill="#0e63a8"/><path d="M2 8h20v8H2z" fill="#f4f8fa"/><path d="M0 8 12 17l12-9v15H0z" fill="#32aee8"/><path d="m0 23 24-15v15z" fill="#1c9fe4"/><path d="M0 8l12 8 12-8-12 3.500z" fill="#f4f8fa"/></svg></div>
 <div class="app run"><svg viewBox="0 0 24 24"><circle cx="13" cy="4.500" r="4" fill="#6a70cc"/><circle cx="20.500" cy="5.500" r="2.600" fill="#5058b8"/><path d="M10 9h9v6q-1 6-6 6t-5-4z" fill="#6a70cc"/><path d="M18 9.500h5.500V17H18z" fill="#5058b8"/><path d="M0 6h12v12H0z" fill="#4850b8"/><text class="t-t" x="3" y="15.500">T</text><circle cx="18" cy="17.500" r="7" fill="#13a10e"/><path d="m14.500 17.500 2.500 2.500 4.500-4.500" fill="none" stroke="#fff" stroke-width="1.500"/></svg></div>
 <div class="app run"><svg viewBox="0 0 24 24"><circle cx="12" cy="12" r="11.500" fill="#34a853"/><path d="M2 6.500Q5 .5 12 .5t10 6H12L7.500 15z" fill="#ea4335"/><path d="M22 6.500q4 8-2 13.500-3 3.500-8.500 3.500L17 14V6.500z" fill="#fbc116"/><circle cx="12" cy="12" r="5.500" fill="#fff"/><circle cx="12" cy="12" r="4.200" fill="#4285f4"/></svg></div>
 <div class="app run active"><svg><use href="#qgis"/></svg></div>
 <div class="app run"><svg viewBox="0 0 24 24"><path d="m8 2 15 1-3 18-6 2z" fill="#eee8d0"/><path d="M9 1.500 21 3l-6 18L1 19z" fill="url(#gS)"/><path d="m1 19 14 2v2L1 20.500z" fill="#ddd"/><path d="m9 1.500 12 1.500" stroke="#888" stroke-dasharray="1 1"/></svg></div>
 <div class="tray">
  <svg class="weather" viewBox="0 0 24 24"><circle cx="9" cy="9" r="8.500" fill="#f39b22"/><path d="M5 20q-5-1-3-5 2-4 6-2 4-5 8 0 4 0 4 4-1 3-4 3H6z" fill="#3889d8"/><circle cx="19" cy="18" r="5" fill="#e4502c"/><path d="M16 18h6" stroke="#fff" stroke-width="1.500"/></svg>
  <span class="wt">Duż...</span>
  <svg class="s1" viewBox="0 0 16 16"><path d="m2.500 10.500 5.500-5 5.500 5" fill="none" stroke="#fff" stroke-width="1.300"/></svg>
  <svg class="s2" viewBox="0 0 16 16"><rect x="3.500" y="4.500" width="7" height="7" rx="1.500" fill="none" stroke="#fff" stroke-width="1.200"/><path d="m10.500 7 3-1.500v5L10.500 9M4 2q3.500-2 7 0M4 14q3.500 2 7 0" fill="none" stroke="#fff"/></svg>
  <svg class="s3" viewBox="0 0 16 16"><path d="m1 3.500 13.500-2V14H1z" fill="none" stroke="#fff" stroke-width="1.200"/><path d="M5 7q3-4 6-1V4M10 9q-3 4-5 1v2" fill="none" stroke="#fff" stroke-width="1.200"/><circle cx="12.500" cy="12.500" r="3.500" fill="#ff9a12"/></svg>
  <svg class="s4" viewBox="0 0 18 16"><path d="M6.500 4.500h9v7h-9" fill="none" stroke="#fff" stroke-width="1.200"/><path d="M8 6h6v4H8zM16 6.500h1.500v3H16z" fill="#fff"/><path d="M2 2v3M5 2v3M1 5h5v2q-1 2-2.500 2T1 7zM3.500 9v3h2" fill="none" stroke="#fff"/></svg>
  <svg class="s5" viewBox="0 0 16 16"><g fill="none" stroke="#fff"><path d="M8 14q0-3 5-4M5 14q0-7 9-7" stroke-width="1.300"/><path d="M2.500 14Q3 5 14 4M0 14Q1 2 14 1" stroke="#888"/></g><circle cx="12" cy="13" r="1.500" fill="#fff"/></svg>
  <svg class="s6" viewBox="0 0 18 16"><path d="M1 6h3l4-3.500v11L4 10H1z" fill="none" stroke="#fff" stroke-width="1.200"/><path d="M10.500 6q1.500 2 0 4M12.500 4q3 4 0 8" fill="none" stroke="#fff"/><path d="M14.500 2.500q4 5.500 0 11" fill="none" stroke="#aaa"/></svg>
  <div class="time"><span>17:01</span><span>13.11.2024</span></div>
  <svg class="note" viewBox="0 0 18 18"><path d="M1.500 1.500h15v12H12L9 16.500l-3-3H1.500z" fill="none" stroke="#fff" stroke-width="1.200"/></svg>
 </div>
</div>
</body>
</html>
```
FILE: styles.css
```css
* { box-sizing: border-box; }
body { margin: 0; width: 1366px; height: 768px; overflow: hidden; font: 12px/16px "Open Sans", "Noto Sans", sans-serif; letter-spacing: -0.3px; color: #000; white-space: nowrap; }
svg { display: block; flex: none; }
svg text { letter-spacing: 0; }
.t-a { font-size: 11px; fill: #222; }
.t-11 { font-size: 10px; font-weight: 700; fill: #444; }
.t-abc { font: 700 7.6px "DejaVu Sans", sans-serif; fill: #222; }
.t-i { font: italic 700 11px "Liberation Serif", serif; fill: #fff; }
.t-e { font: 13px "DejaVu Sans", sans-serif; fill: #6a3d7a; }
.t-t { font-size: 9.5px; font-weight: 700; fill: #fff; }
.sprite { position: absolute; width: 0; height: 0; }
u { text-underline-offset: 2px; }
.i18 { width: 16px; height: 16px; }
.desktop { position: relative; width: 1366px; height: 728px; overflow: hidden; background: #efefef; }
.main { display: flex; flex-direction: column; height: 728px; }
.title { display: flex; align-items: center; gap: 5px; height: 23px; padding-left: 2px; background: #fff; color: #969696; letter-spacing: -0.36px; }
.menu { display: grid; grid-template-columns: 51px 48px 48px 59px 71px 55px 52px 46px 80px 55px 45px 71px 60px; height: 20px; padding-left: 10px; color: #989898; line-height: 20px; border-bottom: 1px solid #d2d2d2; letter-spacing: -0.2px; }

.bar { display: flex; align-items: center; height: 39px; padding-left: 5px; background: linear-gradient(#f7f7f7, #eee); border-bottom: 1px solid #b4b4b4; overflow: hidden; }
.bar > b { display: flex; flex: none; align-items: center; justify-content: center; width: 33px; height: 31px; }
.bar svg { width: 24px; height: 24px; }
.second svg { margin-left: -1px; }
.grip { flex: none; width: 5px; height: 17px; background: radial-gradient(circle, #aaa 0.7px, transparent 1px) 0 0 / 3px 3px; margin-right: 3px; }
.bar > b + .grip { margin-left: 7px; }
.bar b.raised { background: #fff; border: 1px solid #b4b4b4; border-radius: 2px; width: 32px; margin-right: 0; }
.bar b.pressed { background: #dadada; border: 1px solid #adadad; border-radius: 2px; width: 32px; margin: 0 1px; }
.off { opacity: 0.33; }
.off svg { filter: grayscale(0.85); }
.caret { flex: none; width: 8px; height: 5px; background: #555; clip-path: polygon(0 0, 100% 0, 50% 100%); }
.bar .caret { width: 7px; margin: 0 1px 0 4px; background: #999; }
.bar b.drop { position: relative; }
.drop::after { content: ""; position: absolute; right: 2px; bottom: 3px; width: 6px; height: 3px; background: #333; clip-path: polygon(0 0, 100% 0, 50% 100%); }
.label svg { width: 21px; height: 23px; margin-bottom: 3px; }

.work { display: flex; height: 579px; }
.docks { display: flex; flex-direction: column; width: 300px; flex: none; }
.dtitle { display: flex; align-items: center; height: 20px; padding: 0 8px 0 4px; gap: 3px; }
.dtitle span { flex: 1; }
.dtitle svg { width: 11px; height: 11px; }
.docks .dtitle svg { margin-top: -1px; }
.dbar { display: flex; align-items: center; height: 30px; padding: 0 0 2px 8px; gap: 9px; }
.dbar svg { width: 16px; height: 16px; }
.dbar em { position: relative; }
.dbar em::after { content: ""; position: absolute; right: -2px; bottom: 0; width: 5px; height: 3px; background: #555; clip-path: polygon(0 0, 100% 0, 50% 100%); }
.dbar .caret { margin: 0 0 0 -3px; }
.dbar .caret ~ svg { margin-left: -0.5px; margin-right: -0.5px; }
.box { display: flex; width: 294px; border: 1px solid #b4b4b4; background: #fff; overflow: hidden; }
.docks .box { border-left-color: #c8c8c8; }
.browser .box { height: 225px; }
.layers .box { height: 248px; }
.tree { flex: 1; overflow: hidden; }
.browser .tree, .lt, .fields .tree { padding-top: 1px; }
.tr { display: flex; align-items: center; position: relative; height: 18px; padding-left: 19px; gap: 6px; letter-spacing: -0.35px; }
.tr svg { width: 16px; height: 16px; }
.exp::before { content: ""; position: absolute; left: 6px; top: 5px; width: 4px; height: 8px; background: #555; clip-path: polygon(0 0, 100% 50%, 0 100%); }
.scroll { display: flex; flex-direction: column; width: 14px; border-left: 1px solid #c2c2c2; background: #fbfbfb; }
.scroll i { position: relative; height: 14px; }
.scroll .space { flex: 1; }
.scroll .up { border-bottom: 1px solid #c0c0c0; }
.scroll .down { border-top: 1px solid #c0c0c0; }
.up::before, .down::before { content: ""; position: absolute; left: 3px; top: 4px; width: 7px; height: 4px; background: #555; clip-path: polygon(50% 0, 100% 100%, 0 100%); }
.down::before { clip-path: polygon(0 0, 100% 0, 50% 100%); }
.scroll .piece { height: 11px; background: #e9e9e9; border-bottom: 1px solid #c0c0c0; }
.scroll .thumb { background: #e4e4e4; border-top: 1px solid #c0c0c0; }
.scroll .t1 { height: 54px; }
.scroll .t2 { height: 62px; }
.scroll .t3 { height: 122px; border-top: 0; border-bottom: 1px solid #c0c0c0; }
.hsplit { height: 6px; background: repeating-linear-gradient(90deg, #bbb 0 1px, transparent 1px 3px) 140px 2px / 17px 1px no-repeat; }

.lr { display: flex; align-items: center; height: 18px; padding-left: 23px; color: #7c7c7c; font-weight: 700; font-style: italic; letter-spacing: -0.03px; }
.lr span { margin-left: 6px; flex: 1; }
.lr.cur { color: #000; font-style: normal; letter-spacing: -0.28px; }
.lr.vis { color: #000; font-style: normal; letter-spacing: -0.8px; }
.cur { background: #efefef; }
.cb { flex: none; width: 14px; height: 14px; border: 1px solid #b4b4b4; background: #fff; }
.cb.on::before { content: ""; display: block; width: 12px; height: 12px; background: #000; clip-path: polygon(14% 50%, 28% 44%, 42% 66%, 72% 8%, 90% 8%, 50% 94%, 36% 94%); }
.pt { width: 8px; height: 8px; margin: 0 4px 0 10px; border: 1px solid #444; border-radius: 50%; }
.lime { background: #bccb4d; } .gold { background: #e5b636; } .green { background: #729b6f; } .red { background: #e31a1c; }
.q { width: 16px; height: 16px; margin-left: 6px; }
.sw { width: 16px; height: 16px; margin-left: 6px; border: 1px solid #333; }
.purple { background: #8d5a99; } .coral { background: #e77148; } .sage { background: #729b6f; } .limesw { background: #becf50; }
.ln { width: 14px; height: 2px; margin-left: 6px; background: #b58b76; }
.ln.orange { background: #ffa93a; }
.mem { width: 17px; height: 16px; margin-right: 5px; }

.canvas { flex: 1; display: flex; flex-direction: column; min-width: 0; border: 1px solid #b4b4b4; border-top: 1px solid #999; background: #fff; }
.msg { display: flex; align-items: center; height: 30px; padding-left: 9px; background: #dff0d8; border-bottom: 1px solid #8f9b8b; border-top: 1px solid #a5b0a0; font-size: 11px; letter-spacing: -0.33px; }
.msg svg { width: 24px; height: 18px; margin: -2px 10px 0 0; }
.msg strong { width: 154px; letter-spacing: 0.22px; }
.msg span { width: 167px; }
.msg a { color: #1c8a00; text-decoration: underline; letter-spacing: -0.45px; }
.map { width: 1064px; height: 548px; }
.status { display: flex; align-items: center; height: 28px; padding: 1px 0 0 4px; font-size: 11px; letter-spacing: -0.1px; }
.locator { display: flex; align-items: center; gap: 6px; width: 200px; height: 22px; margin: -1px 334px 0 0; padding: 1px 0 0 8px; border: 1px solid #acacac; border-radius: 2px; background: #fff; color: #777; letter-spacing: -0.1px; }
.locator svg { width: 13px; height: 13px; }
.coordl { width: 67px; }
.field { height: 22px; border: 1px solid #acacac; border-radius: 2px; background: #fff; line-height: 21px; padding-left: 6px; margin-top: -1px; }
.coord { width: 105px; }
.mouse { width: 16px; height: 16px; margin: -2px 12px 0 4px; }
.scalel { width: 29px; letter-spacing: -0.3px; }
.scale { width: 90px; padding-left: 4px; }

.dialog { position: absolute; left: 793px; top: 1px; width: 571px; height: 740px; display: flex; flex-direction: column; border: 1px solid #666; background: #efefef; box-shadow: 0 2px 9px rgba(0, 0, 0, 0.55); }
.dgtitle { display: flex; align-items: center; height: 30px; padding-left: 8px; gap: 5px; background: #fff; }
.dgtitle .i18 { margin-top: -2px; }
.dgtitle span { flex: 1; letter-spacing: -0.45px; }
.wc { width: 138px; height: 30px; }
.dgmenu { display: grid; grid-template-columns: 38px 58px 58px 50px; height: 20px; padding-left: 10px; line-height: 21px; border-bottom: 1px solid #d4d4d4; letter-spacing: -0.2px; }
.dgbody { display: flex; flex: 1; }
.left { width: 250px; padding: 9px 0 0 9px; }
.pivot { display: flex; flex-direction: column; width: 242px; height: 642px; border: 1px solid #b4b4b4; background: #fff; }
.hd { display: flex; height: 19px; background: #efefef; }
.hd > i { width: 11px; border-right: 1px solid #c4c4c4; border-bottom: 1px solid #b8b8b8; }
.hd span { width: 35px; height: 19px; text-align: center; line-height: 19px; border-right: 1px solid #c4c4c4; border-bottom: 1px solid #b8b8b8; background: linear-gradient(#fafafa, #e9e9e9); }
.hd .h1 { display: flex; align-items: center; justify-content: flex-end; gap: 8px; padding-right: 3px; }
.h1 .caret { height: 4px; margin-bottom: 3px; }
.prow { display: flex; height: 30px; }
.prow span { border-right: 1px solid #c4c4c4; border-bottom: 1px solid #c4c4c4; }
.vh { display: flex; flex-direction: column; justify-content: center; width: 11px; padding-left: 2px; background: #f4f4f4; }
.vh small { height: 9px; line-height: 7px; padding-left: 3px; font-size: 9px; }
.cell { width: 35px; text-align: right; padding-right: 3px; line-height: 30px; letter-spacing: -0.6px; }
.pink { background: #f4eaea; }
.rest { flex: 1; width: 11px; background: #efefef; }
.dgstatus { margin: 13px 0 0 -3px; font-size: 11px; letter-spacing: 0; }
.vsplit { width: 16px; background: repeating-linear-gradient(#bbb 0 1px, transparent 1px 3px) 12px 323px / 2px 16px no-repeat; }
.panel { flex: 1; }
.panel .dtitle { height: 20px; padding: 0 3px 0 4px; }
.pin { display: flex; flex-direction: column; width: 293px; padding-left: 9px; font-size: 11px; letter-spacing: -0.2px; }
.lab { height: 16px; }
.l1 { margin: 7px 0 5px -1px; }
.combo { display: flex; align-items: center; justify-content: space-between; height: 22px; padding: 0 7px 0 4px; border: 1px solid #aaa; border-radius: 2px; background: linear-gradient(#fdfdfd, #ececec); }
.l2 { margin: 4px 0 4px -1px; }
.fields { width: 284px; height: 300px; }
.fr { display: flex; align-items: center; height: 26px; padding-left: 4px; gap: 7px; font-size: 12px; letter-spacing: -0.3px; }
.fr svg { width: 22px; height: 22px; }
.fr { margin-left: -1px; gap: 8px; }
.two { display: grid; grid-template-columns: 139px 139px; gap: 6px; width: 284px; }
.two > div { display: flex; align-items: center; }
.btn { display: block; border: 1px solid #aaa; border-radius: 3px; background: linear-gradient(#fff, #ececec); text-align: center; height: 21px; line-height: 20px; }
.r1 { margin-top: 7px; height: 20px; }
.r1 .btn { width: 38px; height: 20px; line-height: 19px; letter-spacing: -0.35px; }
.r1 > div:last-child, .r2 > div:last-child { margin-left: -1px; padding-top: 1px; }
.areas { height: 70px; margin-top: 6px; }
.two.areas > div { display: block; border: 1px solid #b4b4b4; background: #fff; padding-top: 1px; }
.r2 { height: 20px; margin-top: 6px; }
.r2 > div:first-child { margin-left: -1px; }
.r2 > div:last-child { letter-spacing: -0.35px; padding-top: 0; }
.r2 .cb { margin: 0 4px 0 11px; }
.r2 + .areas { margin-top: 5px; }
.foot { display: flex; align-items: center; height: 21px; margin-top: 6px; width: 284px; }
.foot > span:nth-child(2) { flex: 1; padding-left: 4px; letter-spacing: -0.24px; }
.clear { width: 80px; }
.calc { width: 284px; margin-top: 6px; }

.taskbar { display: flex; height: 40px; background: #29232a; color: #fff; }
.start { display: flex; align-items: center; justify-content: center; width: 48px; }
.start svg { width: 16px; height: 16px; }
.search { display: flex; align-items: center; width: 288px; padding-left: 10px; gap: 11px; border: 1px solid #5a5a5a; background: #333; color: #e2e2e2; font-size: 14.5px; letter-spacing: -0.3px; }
.search svg { width: 18px; height: 18px; }
.tv { display: flex; align-items: center; justify-content: center; width: 50px; }
.tv svg { width: 18px; height: 18px; }
.app { display: flex; align-items: center; justify-content: center; width: 49px; position: relative; }
.app svg { width: 24px; height: 24px; }
.run::after { content: ""; position: absolute; left: 5px; right: 4px; bottom: 0; height: 2px; background: #76b9ed; }
.elephant svg { filter: drop-shadow(0 0 0.7px #fff) drop-shadow(0 0 0.5px #fff); }
.active { background: #524d53; box-shadow: inset 1px 0 #29232a; }
.active::after { left: 1px; right: 1px; }
.tray { display: flex; align-items: center; flex: 1; padding-left: 188px; }
.weather { width: 26px; height: 25px; }
.wt { width: 58px; padding-left: 7px; font-size: 14px; letter-spacing: -0.2px; }
.s1, .s2, .s3, .s5 { width: 16px; height: 16px; }
.s1 { margin-left: 8px; }
.s2 { margin-left: 9px; }
.s3 { margin-left: 6px; }
.s4 { width: 18px; height: 16px; margin-left: 7px; }
.s5 { margin-left: 9px; }
.s6 { width: 18px; height: 16px; margin-left: 5px; }
.time { display: flex; flex-direction: column; align-items: center; width: 72px; font-size: 12px; line-height: 18px; letter-spacing: -0.55px; }
.note { width: 18px; height: 18px; margin-left: 9px; }
```
